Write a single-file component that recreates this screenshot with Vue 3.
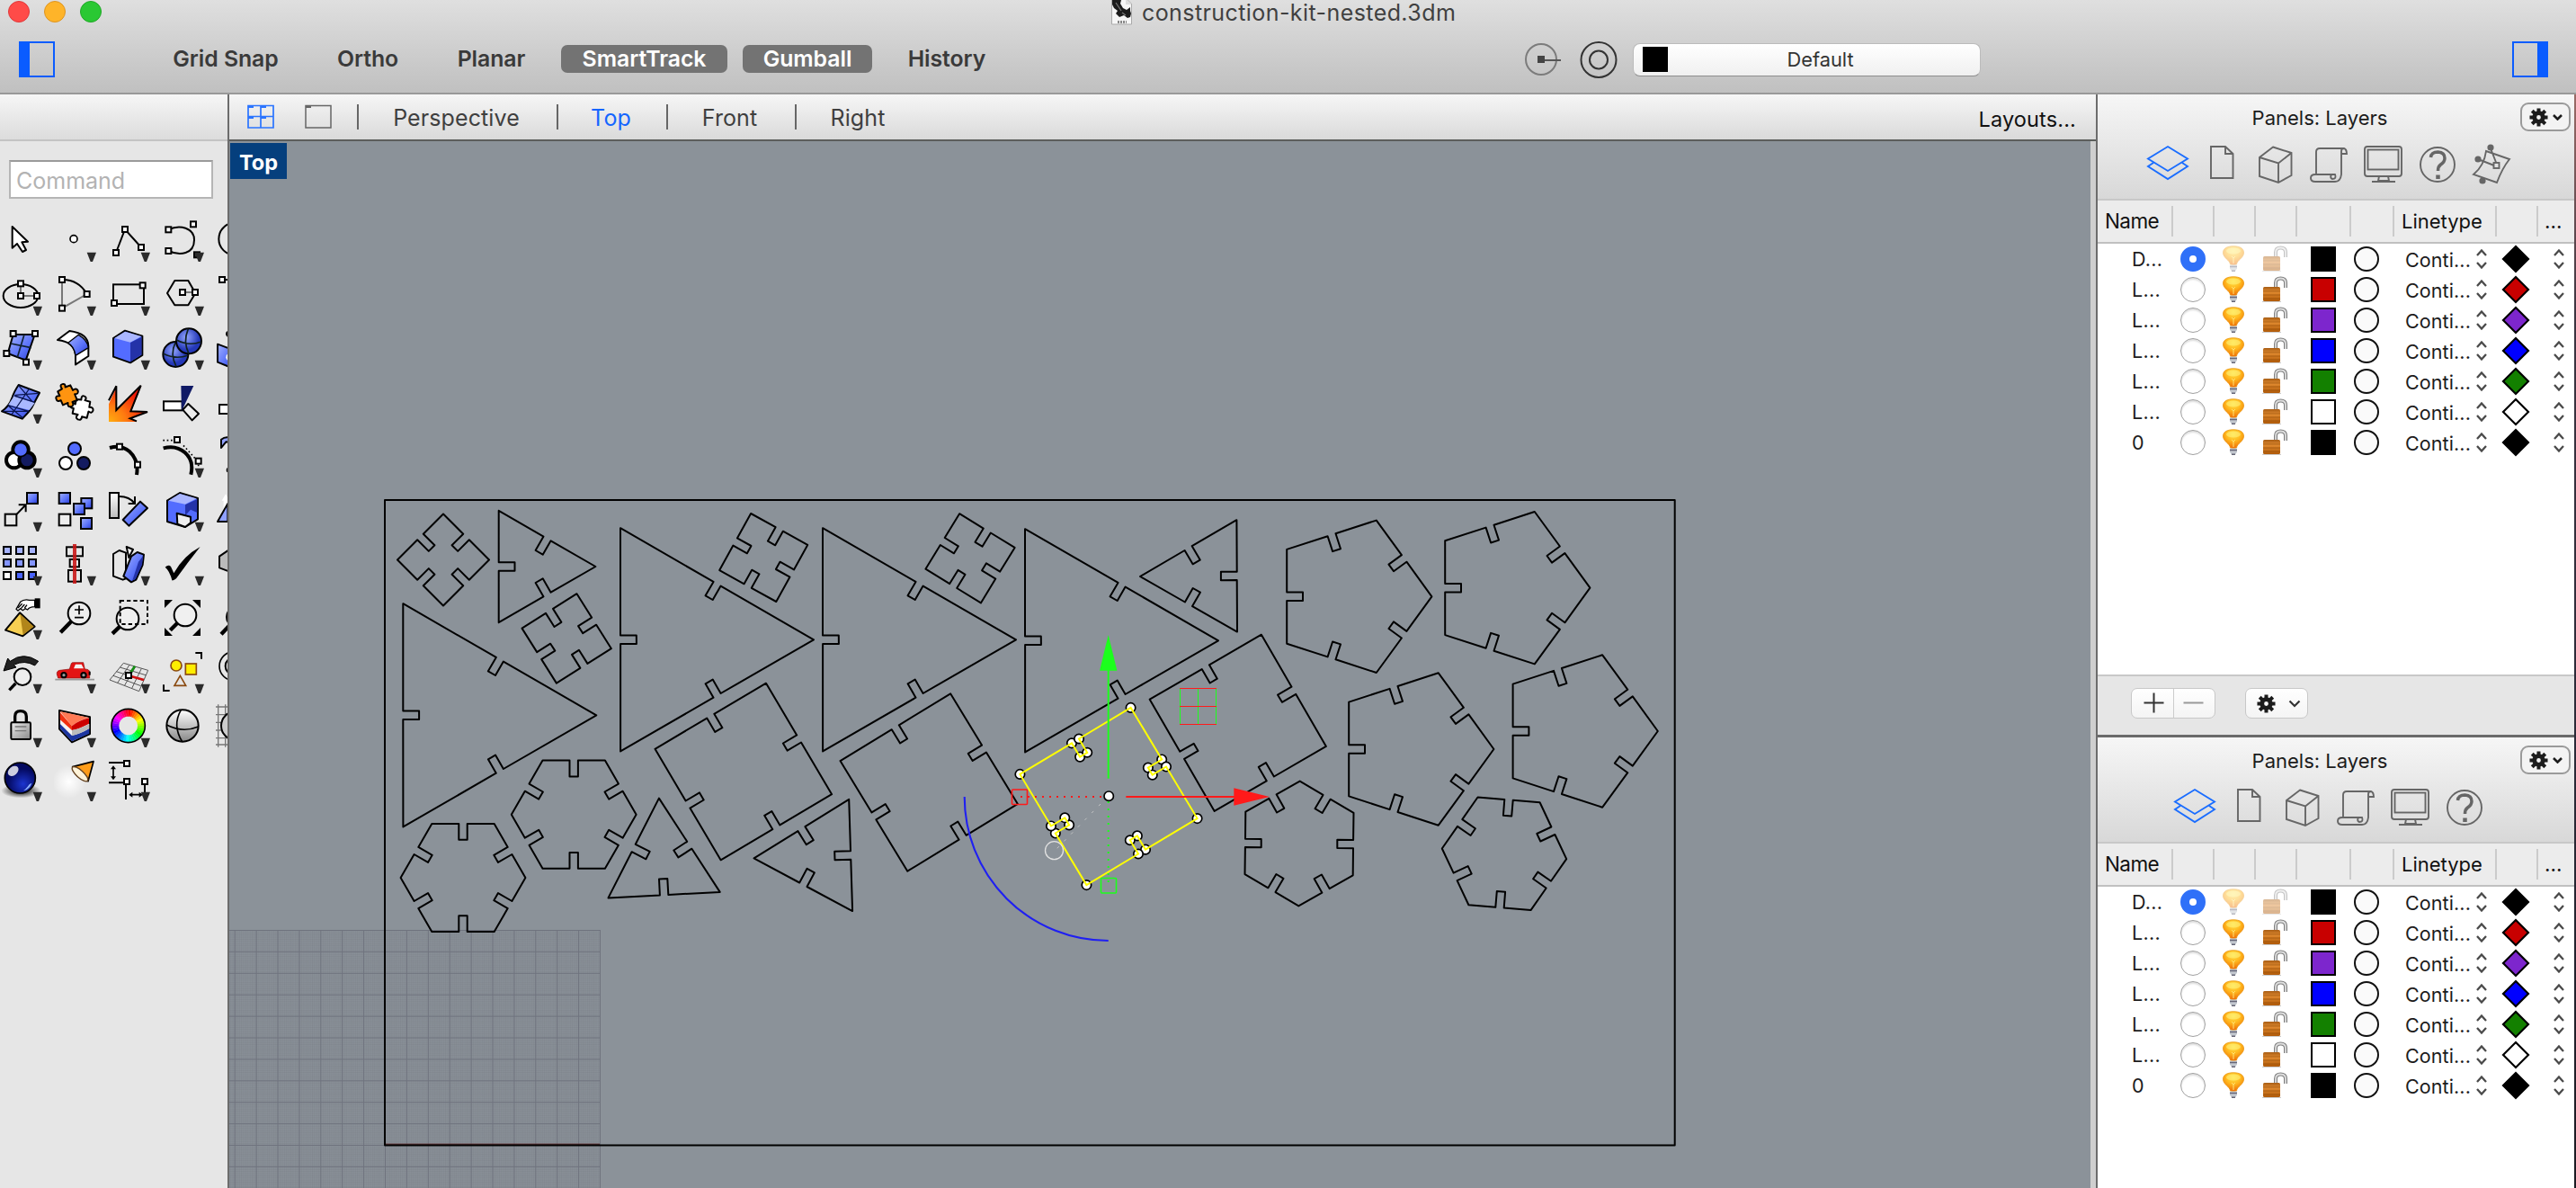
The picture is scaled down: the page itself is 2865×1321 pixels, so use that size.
<script setup>
const BLUE = 'url(#gBlue)'
const sq = (x, y, f = '#fff') =>
  `<rect x="${x - 9}" y="${y - 9}" width="18" height="18" fill="${f}" stroke="#000" stroke-width="6"/>`
const box = (x, y, w, h, f) =>
  `<rect x="${x}" y="${y}" width="${w}" height="${h}" fill="${f}" stroke="#000" stroke-width="6"/>`
const ln = (d, w = 6, c = '#000', extra = '') =>
  `<path d="${d}" fill="none" stroke="${c}" stroke-width="${w}" ${extra}/>`
const sh = (d, f, w = 6) =>
  `<path d="${d}" fill="${f}" stroke="#000" stroke-width="${w}" stroke-linejoin="round"/>`
const ci = (x, y, r, f, w = 6) =>
  `<circle cx="${x}" cy="${y}" r="${r}" fill="${f}" stroke="#000" stroke-width="${w}"/>`
const wheel = Array.from({ length: 36 }, (_, i) => {
  const a = (d) => ((d - 90) * Math.PI) / 180
  const p = (d) => `${68 + 43 * Math.cos(a(d))} ${81 + 43 * Math.sin(a(d))}`
  return ln(`M${p(i * 10 - 0.5)} A43 43 0 0 1 ${p(i * 10 + 10.5)}`, 24, `hsl(${i * 10} 100% 50%)`)
}).join('')
const puzzle = (f) =>
  sh('M-30 -22 L-14 -27 Q-20 -42 -9 -42 Q2 -42 -2 -30 L16 -32 L20 -14 Q34 -20 36 -8 Q36 4 23 0 L26 22 L9 24 Q13 38 0 38 Q-12 36 -6 23 L-24 26 L-27 9 Q-41 13 -41 0 Q-41 -11 -27 -6 Z', f)

// each tool is drawn in a 180 x 180 box; m marks tools with a flyout menu
const tools = [
  { s: sh('M41 36 V107 L57 93 L75 120 L87 114 L73 88 L93 86 Z', '#fff') },
  { m: 1, s: ci(66, 77, 12, '#fff', 5) },
  { m: 1, s: ln('M27 123 L57 45 L111 105') + sq(27, 123) + sq(57, 45) + sq(111, 105) },
  { m: 1, s: ln('M22 46 C60 28 108 40 108 80 C108 128 60 134 22 117') + sq(22, 46) + sq(105, 28) + sq(22, 117) + sq(117, 130, '#333') },
  { s: ci(64, 77, 54, 'none') },

  { m: 1, s: '<ellipse cx="69" cy="87" rx="58" ry="39" fill="none" stroke="#000" stroke-width="6"/>' + ln('M69 46 V87 H123', 6, '#777') + sq(69, 46) + sq(69, 87) + sq(123, 87) },
  { m: 1, s: ln('M110 81 L27 128 V33', 6, '#777') + ln('M27 33 Q82 32 110 81') + sq(27, 33) + sq(110, 81) + sq(27, 128) },
  { m: 1, s: box(18, 49, 102, 65, 'none') + sq(116, 52) + sq(21, 111) },
  { m: 1, s: sh('M18 78 L43 36 H88 L112 78 L88 118 H43 Z', 'none') + ln('M69 75 H111', 6, '#777') + sq(69, 75) + sq(111, 75) },
  { s: ln('M20 33 H60') + sq(21, 33) },

  { m: 1, s: sh('M44 36 H116 L86 122 L26 99 Z', BLUE) + ln('M81 36 L58 112 M36 66 L104 80', 5, '#123') + sq(44, 33) + sq(117, 33) + sq(87, 128) + sq(22, 99) },
  { m: 1, s: sh('M12 54 L52 24 Q115 32 115 75 V108 L72 136 V104 Q68 60 12 54 Z', '#fff') + sh('M47 64 L82 37 Q112 54 115 80 L72 106 Q68 76 47 64 Z', BLUE, 4) },
  { m: 1, s: sh('M57 23 L115 41 V105 L75 130 L18 110 V48 Z', '#536cff') + '<path d="M57 26 L112 42 L75 62 L22 48Z" fill="#aab6ff"/><path d="M75 63 L112 44 V103 L75 127Z" fill="#2432a8"/>' },
  { m: 1, s: ci(46, 102, 42, 'url(#gBall)') + ln('M5 100 Q46 120 86 106 M46 61 Q26 100 48 143', 5, '#122') + ci(90, 58, 42, 'url(#gBall)') + ln('M49 54 Q90 76 131 60 M88 17 Q70 60 90 100', 5, '#122') },
  { s: sh('M6 68 L60 88 V150 L6 128 Z', BLUE) + ci(44, 34, 8, '#000') + ci(46, 112, 12, '#fff', 0) },

  { m: 1, s: sh('M62 24 L132 50 Q118 76 106 100 Q96 116 74 137 L6 112 Q30 96 40 68 Q46 48 62 24 Z', BLUE) + '<path d="M46 62 L116 84 L98 108 L28 90Z" fill="#a9b8ff"/>' + ln('M98 36 Q72 75 38 124 M48 60 L116 82 M26 92 L96 112 M62 26 L108 80 M50 58 L128 52 M26 92 L76 134 M96 112 L10 112', 4, '#0a1550') },
  { s: `<g transform="translate(94 104) rotate(22)">${puzzle('#fff')}</g><g transform="translate(47 60) rotate(-14)">${puzzle('#ff9410')}</g>` },
  { s: '<path d="M3 147 V88 L30 28 V108 L112 26 L78 112 L132 115 L75 136 L98 147 Z" fill="url(#gFire)"/>' + ln('M3 76 L28 28 V108 L110 26 L76 112 L132 114 L74 136 L96 145') },
  { s: box(6, 79, 62, 30, '#fff') + '<path d="M64 27 H106 L66 112Z" fill="#101a66"/>' + sh('M70 107 L88 87 L123 120 L101 142 Z', '#eee') },
  { s: box(12, 90, 60, 30, '#fff') },

  { m: 1, s: ci(69, 60, 26, '#536cff', 12) + ci(47, 95, 26, '#fff', 12) + ci(90, 95, 26, '#131b60', 12) + ci(69, 60, 23, '#536cff', 5) },
  { s: ci(69, 57, 21, '#536cff') + ci(39, 105, 21, '#fff') + ci(99, 105, 21, '#131b60') },
  { s: ln('M6 54 Q44 42 72 66 Q104 96 96 144', 12) + sq(39, 50) + sq(99, 110) },
  { m: 1, s: ln('M4 29 H40 M72 46 L110 88 M122 110 V150', 5, '#000', 'stroke-dasharray="5 8"') + ln('M5 55 C60 40 112 80 97 143', 12) + sq(51, 27) + sq(122, 98) },
  { s: sh('M18 54 V26 Q36 12 60 26 V36 L34 34 Z', '#93a3ff') + ci(44, 128, 6, '#000') },

  { m: 1, s: box(90, 24, 36, 36, BLUE) + box(17, 95, 38, 38, '#e8e8e8') + ln('M54 97 L84 66 M62 64 H86 V88') },
  { s: box(17, 24, 37, 36, BLUE) + box(91, 42, 36, 34, BLUE) + box(66, 60, 36, 36, BLUE) + box(90, 108, 36, 36, BLUE) + box(17, 95, 38, 38, '#eee') },
  { s: box(6, 24, 30, 84, 'url(#gGrey)') + sh('M50 114 L108 53 L132 75 L70 134 Z', BLUE) + ln('M38 36 Q72 36 90 60 M90 36 V60 H68') },
  { m: 1, s: sh('M60 24 L120 42 V112 L78 138 L18 120 V50 Z', '#536cff') + '<path d="M60 27 L116 43 L78 62 L22 50Z" fill="#aab6ff"/><path d="M78 64 L118 45 V90 L96 80 L78 100Z" fill="#2432a8"/>' + sh('M50 92 L96 104 V124 L78 138 L52 128 Z', '#eee') },
  { s: '<path d="M33 28 L44 50 H38 V90 H26 V50 H20Z" fill="#fff"/>' + sh('M6 120 L40 60 V120 Z', '#8fa0ff') },

  { m: 1, s: [0, 1, 2].map(r => [0, 1, 2].map(c => box(12 + 42 * c, 24 + 42 * r, 24, 24, r === 2 ? (c ? '#4a63ff' : '#fff') : r ? '#8495ff' : '#a5b2ff')).join('')).join('') },
  { m: 1, s: box(42, 25, 54, 30, '#e6e6e6') + box(53, 66, 31, 25, '#e6e6e6') + box(48, 102, 42, 38, '#e6e6e6') + '<rect x="63" y="15" width="12" height="132" fill="#c81414" opacity=".88"/>' },
  { m: 1, s: sh('M18 48 L38 36 L60 44 V130 L50 134 L18 122 Z', '#e6e6e6') + sh('M62 24 L84 33 L70 60 Z', '#fff') + sh('M52 122 L78 56 L98 42 L120 50 L116 84 L94 134 L78 142 Z', BLUE) + '<path d="M102 74 L118 54 L114 84 L92 132 L82 136Z" fill="#2432a8"/>' },
  { m: 1, s: '<path d="M11 92 Q22 82 30 90 L40 112 Q72 54 128 24 Q88 74 48 130 Q40 137 34 136 Q26 104 11 92Z"/>' },
  { s: sh('M12 56 L44 34 V106 L12 94 Z', '#bbb') },

  { m: 1, s: sh('M54 52 L68 28 Q80 18 98 22 L116 22 V44 Q98 44 92 54 L84 50 L76 56 L68 50 L60 57 Z', '#fff', 4) + ln('M60 48 L74 34 M70 50 L82 36 M82 48 L90 38', 4) + '<rect x="116" y="16" width="18" height="33"/>' + sh('M66 64 L116 110 L76 142 L18 122 Z', '#f6cf52') + '<path d="M67 68 L113 110 L77 138Z" fill="#b1851a"/>' },
  { s: ln('M57 94 L22 130', 13) + ci(84, 66, 37, '#eee') + ln('M84 40 V70 M69 54 H99 M69 80 H99', 5) },
  { s: ln('M40 110 L15 134', 13) + ci(66, 84, 37, '#f0f0f0') + ln('M41 24 H132 V102 H41 Z', 6, '#000', 'stroke-dasharray="13 9"') },
  { s: '<path d="M9 21H36L9 48Z M129 21V48L102 21Z M9 141V114L36 141Z M129 141H102L129 114Z"/>' + ln('M52 98 L28 122', 13) + ci(78, 72, 37, '#f0f0f0') },
  { s: ln('M48 104 L18 136', 13) + ci(70, 78, 34, '#eee') },

  { m: 1, s: '<path d="M12 78 L26 36 L34 46 Q78 12 128 46 L116 60 Q82 40 46 58 L54 66Z" fill="#222" stroke="#000" stroke-width="3"/>' + ln('M52 120 L31 142', 10) + ci(75, 98, 28, '#eee') },
  { m: 1, s: ln('M4 107 H135', 5, '#999') + '<path d="M10 90 Q8 78 20 76 L52 72 L58 53 Q59 50 64 50 H98 L103 72 Q118 72 119 82 V102 H14Z" fill="#e31414" stroke="#8a0c0c" stroke-width="2"/><path d="M66 70 L72 56 H92 L99 70Z" fill="#f2f2f2"/><rect x="116" y="80" width="6" height="12"/>' + ci(33, 92, 8, '#999') + ci(99, 92, 8, '#999') },
  { m: 1, s: ln('M52 52 L134 76 L104 146 L6 108 Z M40 66 L126 92 M28 80 L118 110 M18 94 L110 128 M72 58 L32 118 M92 64 L56 126 M112 70 L80 136', 3, '#555') + ln('M69 94 L90 62', 8, '#159015') + ln('M69 94 L120 108', 8, '#d01010') + sq(69, 93) },
  { m: 1, s: `<g fill="#ffee00" stroke="#8a4a10" stroke-width="5"><circle cx="48" cy="60" r="18"/><rect x="79" y="54" width="36" height="36"/><path d="M61 94 L42 127 H80Z" fill="#e6e6e6"/></g>` + ln('M112 18 H132 V38 M6 124 V144 H26') },
  { s: ci(60, 62, 28, '#ddd') + ci(60, 62, 48, 'none', 5) },

  { m: 1, s: ln('M50 72 V50 Q50 32 68 32 Q88 32 88 50 V72', 10) + `<rect x="37" y="70" width="65" height="56" rx="4" fill="url(#gGrey2)" stroke="#000" stroke-width="6"/>` + ln('M50 84 H88 M50 98 H88', 4, '#777') },
  { m: 1, s: sh('M18 30 L120 52 V108 L60 136 L18 92 Z', '#f4f4f4') + '<path d="M20 33 L117 54 Q84 62 60 82Z" fill="#ff7a55"/><path d="M20 36 L60 82 V96 L20 60Z" fill="#f03010"/><path d="M60 82 Q84 62 117 55 V74 Q84 92 60 96Z" fill="#c00"/><path d="M60 114 Q88 108 118 90 V107 L60 133 L20 90 V74Z" fill="#1c35a0"/><path d="M60 96 V114 Q88 108 118 90 V75 Q84 92 60 96Z" fill="#bbb"/>' },
  { m: 1, s: wheel + ci(68, 81, 56, 'none', 5) },
  { s: ci(69, 81, 53, 'url(#gSph)') + ln('M16 78 Q69 106 122 84 M64 28 Q34 80 68 134', 5) },
  { s: ln('M0 18 H60 M0 44 H60 M0 70 H60 M0 96 H60 M0 122 H60 M0 144 H60 M8 10 V152 M32 10 V152', 4, '#777') + ci(66, 81, 48, '#ccc') },

  { m: 1, s: '<ellipse cx="70" cy="118" rx="66" ry="24" fill="url(#gShadow)"/>' + ci(67, 75, 51, 'url(#gNavy)', 5) + '<ellipse cx="44" cy="52" rx="20" ry="14" fill="#fff" opacity=".8" transform="rotate(-40 44 52)"/><path d="M78 118 Q100 112 106 92 Q98 94 92 104 Q86 112 78 118Z" fill="#8fb4ff"/>' },
  { m: 1, s: '<circle cx="50" cy="88" r="56" fill="url(#gGlow)"/>' + sh('M132 20 L62 38 Q66 70 114 86 Z', '#ff9d1a', 5) + '<ellipse cx="87" cy="62" rx="34" ry="12" transform="rotate(42 87 62)" fill="#fff3d8" stroke="#642" stroke-width="4"/>' },
  { m: 1, s: ln('M3 24 H60 M3 91 H60 M60 90 V147 M123 90 V130') + ln('M18 40 V78 M74 131 H112', 5) + '<path d="M18 34l9 12h-18z M18 82l9 -12h-18z M70 131l12 -9v18z M116 131l-12 -9v18z"/>' + sq(63, 27) + sq(63, 87) + sq(123, 87) },
]

// regular polygons with one slot in the middle of every side
const SLOT_W = 9.4
const SLOT_D = 17.8
function outline(n, cx, cy, r, rot) {
  const v = Array.from({ length: n }, (_, i) => {
    const a = ((rot + (360 / n) * i) * Math.PI) / 180
    return [cx + r * Math.cos(a), cy + r * Math.sin(a)]
  })
  const out = []
  v.forEach(([x1, y1], i) => {
    const [x2, y2] = v[(i + 1) % n]
    const len = Math.hypot(x2 - x1, y2 - y1)
    const ux = (x2 - x1) / len
    const uy = (y2 - y1) / len
    const at = (t, d) => [x1 + ux * t - uy * d, y1 + uy * t + ux * d]
    const a = (len - SLOT_W) / 2
    out.push([x1, y1], at(a, 0), at(a, SLOT_D), at(a + SLOT_W, SLOT_D), at(a + SLOT_W, 0))
  })
  return out
}
const toStr = (pts) => pts.map((p) => p.map((k) => k.toFixed(1)).join(',')).join(' ')
const parts = [
  [4, 493, 622.5, 51, 0], [4, 630.2, 709.9, 51, 12.8], [4, 849.2, 620, 51, -16], [4, 1079, 620.8, 51, -13.5],
  [4, 826.8, 858, 101.5, 14.4], [4, 1033.2, 870, 101.5, 13.6], [4, 1376.8, 803.8, 101.5, 14.9],
  [3, 520, 795.3, 143.3, 0], [3, 761.7, 711.3, 143.3, 0], [3, 986.7, 711.3, 143.3, 0], [3, 1211.7, 712.3, 143.3, 0],
  [3, 590.6, 630, 71.8, 0], [3, 736.7, 959.3, 71.8, 27], [3, 910.3, 952.1, 71.8, 178.2], [3, 1339.8, 640.6, 71.8, 179.7],
  [6, 515, 976, 69.4, 0], [6, 638.2, 905.7, 69.4, 0], [6, 1445, 938, 69.4, -89.4], [6, 1673, 949.3, 69.4, 4.8],
  [5, 1503.3, 663.3, 89.1, 0], [5, 1679.3, 653.7, 89.1, 0], [5, 1572.3, 833, 89.1, 0], [5, 1754.7, 813, 89.1, 0],
].map((p) => toStr(outline(...p)))
const selected = outline(4, 1233, 885.5, 101.6, 14)

const snaps = [
  { t: 'Grid Snap', w: 118, g: 131 }, { t: 'Ortho', w: 70, g: 64 }, { t: 'Planar', w: 77, g: 64 },
  { t: 'SmartTrack', w: 185, g: 39, on: true }, { t: 'Gumball', w: 144, g: 17, on: true }, { t: 'History', w: 88, g: 39 },
]
const views = [
  { t: 'Perspective', w: 141, a: 38, b: 41 }, { t: 'Top', w: 43, a: 37, b: 40, on: true },
  { t: 'Front', w: 63, a: 37, b: 41 }, { t: 'Right', w: 64, a: 36, b: 0 },
]
const layers = [
  { n: 'D...', c: '#000', on: true }, { n: 'L...', c: '#c80000' }, { n: 'L...', c: '#7d26cd' },
  { n: 'L...', c: '#0000ff' }, { n: 'L...', c: '#138000' }, { n: 'L...', c: '#fff' }, { n: '0', c: '#000' },
]
const panelIcons = [
  '<g stroke="#1a6dff"><path d="M30 12 L52 25.5 L30 39 L8 25.5Z M14 30 L8 34 L30 48 L52 34 L46 30"/></g>',
  '<path d="M18 12 H34 L42.5 20 V47 H18Z M34 12 V20 H42.5"/>',
  '<path d="M27 12.500 L47.500 19 V44 L33 52 L12 45 V24Z M12 24 L33 30.500 L47.500 19 M33 30.500 V52"/>',
  '<path d="M15 43 V18 Q15 14 19 14 H46 Q49 15 49 20 H43 V17 Q43 14 46 14 M43 20 V43 Q42 51 36 51 H14 Q9 51 9 47 Q9 43 14 43 H36 Q38 48 33 48 Q30 47 32 43"/>',
  '<rect x="9" y="12" width="41" height="33" rx="3"/><rect x="12.500" y="15.500" width="34" height="22"/><path d="M25 45 L24 50 H36 L35 45 M17 51 H43"/>',
  '<circle cx="30" cy="32" r="19"/><path stroke-width="3.500" d="M22.500 24 Q23 18 30.500 18 Q38 18.500 38 25 Q38 29 33.500 32 Q30.500 34 30.500 39"/><path stroke-width="4.500" d="M30.500 43.500 V48"/>',
  '<path d="M24 17 L50 26 Q42 36 36 52 L10 43 Q22 33 24 17Z M29 14 L36 32 M15 26 L33 33"/><rect x="32.500" y="30" width="6" height="6" fill="#e4e4e4"/><g fill="#666" stroke="none"><circle cx="29" cy="13" r="3.600"/><circle cx="15" cy="26" r="3.600"/><circle cx="20" cy="50" r="3.600"/></g>',
]
const panels = [{ icons: panelIcons, footer: true }, { icons: panelIcons.slice(0, 6), footer: false }]
</script>

<template>
  <div class="app">
    <svg class="defs" width="0" height="0">
      <defs>
        <linearGradient id="gBlue" x1="0" y1="0" x2="1" y2="1"><stop offset="0" stop-color="#a3b2ff" /><stop offset=".6" stop-color="#5870f8" /><stop offset="1" stop-color="#2a3bd0" /></linearGradient>
        <radialGradient id="gBall" cx=".4" cy=".35"><stop offset="0" stop-color="#93a6ff" /><stop offset="1" stop-color="#2438b8" /></radialGradient>
        <radialGradient id="gFire" cx="0" cy="1" r="1"><stop offset="0" stop-color="#ffae10" /><stop offset=".45" stop-color="#ff7a10" /><stop offset="1" stop-color="#f01808" /></radialGradient>
        <linearGradient id="gGrey" x1="0" y1="0" x2="0" y2="1"><stop offset="0" stop-color="#fff" /><stop offset="1" stop-color="#bbb" /></linearGradient>
        <linearGradient id="gGrey2" x1="0" y1="0" x2="1" y2="1"><stop offset="0" stop-color="#eee" /><stop offset="1" stop-color="#888" /></linearGradient>
        <linearGradient id="gSph" x1="0" y1="0" x2="0" y2="1"><stop offset="0" stop-color="#fff" /><stop offset="1" stop-color="#888" /></linearGradient>
        <radialGradient id="gShadow"><stop offset=".4" stop-color="#333" stop-opacity=".8" /><stop offset="1" stop-color="#333" stop-opacity="0" /></radialGradient>
        <radialGradient id="gNavy" cx=".6" cy=".7"><stop offset="0" stop-color="#1c35d0" /><stop offset="1" stop-color="#040a60" /></radialGradient>
        <radialGradient id="gGlow"><stop offset="0" stop-color="#fff" /><stop offset="1" stop-color="#fff" stop-opacity="0" /></radialGradient>
        <radialGradient id="gBulb" cx=".5" cy=".25" r=".7"><stop offset="0" stop-color="#ffe34a" /><stop offset=".5" stop-color="#ffb81e" /><stop offset="1" stop-color="#f07408" /></radialGradient>
        <linearGradient id="gLock" x1="0" y1="0" x2="0" y2="1"><stop offset="0" stop-color="#a85d14" /><stop offset=".35" stop-color="#e08a30" /><stop offset="1" stop-color="#b05a08" /></linearGradient>
        <symbol id="gear" viewBox="-11 -11 22 22">
          <circle r="5" fill="none" stroke="#1c1c1c" stroke-width="5" />
          <path d="M0 -10.500V-6M0 10.500V6M-10.500 0H-6M10.500 0H6M-7.600 -7.600L-4.500 -4.500M7.600 7.600L4.500 4.500M-7.600 7.600L-4.500 4.500M7.600 -7.600L4.500 -4.500" stroke="#1c1c1c" stroke-width="4.200" />
        </symbol>
      </defs>
    </svg>

    <header class="top">
      <div class="titlebar">
        <div class="lights"><i class="red" /><i class="amber" /><i class="green" /></div>
        <svg class="docicon" width="26" height="29" viewBox="0 0 26 29">
          <path d="M1.500 -2 H17 L23.500 4 V27 H1.500Z" fill="#f6f6f6" stroke="#aaa" />
          <path d="M17 -2 V5 H23.500" fill="#ddd" />
          <path d="M2 0 H12 L11 4 L14 9 L18 11 L22 8 V12 L23 15 L22 19 L19 20 L15 17 L10 19 L6 15 L8 12 L4 9 L2 5Z" fill="#1c1c1c" />
          <path d="M6 3l6 9M13 14l4 3" stroke="#777" stroke-width="1.200" />
          <path d="M8 24.500 H18" stroke="#888" stroke-width="3" stroke-dasharray="2 1" />
        </svg>
        <span class="doc">construction-kit-nested.3dm</span>
      </div>
      <div class="toolbar">
        <svg class="side" width="40" height="40"><rect x="1" y="1" width="38" height="38" fill="none" stroke="#0a5cff" stroke-width="2" /><rect width="12" height="40" fill="#0a5cff" /></svg>
        <span v-for="s in snaps" :key="s.t" class="snap" :class="{ on: s.on }" :style="{ width: s.w + 'px', marginLeft: s.g + 'px' }">{{ s.t }}</span>
        <svg class="osnap" width="108" height="44" viewBox="0 0 108 44" fill="none" stroke="#333">
          <circle cx="22" cy="22" r="17" stroke="#7c7c7c" stroke-width="2" />
          <rect x="18" y="18" width="8" height="8" fill="#444" stroke="none" /><path d="M26 23 H44" stroke="#555" stroke-width="2" />
          <circle cx="86" cy="22.500" r="19.500" stroke-width="2" /><circle cx="86" cy="22.500" r="10" stroke-width="2" />
        </svg>
        <div class="select"><i /><span>Default</span></div>
        <svg class="side last" width="40" height="40"><rect x="1" y="1" width="38" height="38" fill="none" stroke="#0a5cff" stroke-width="2" /><rect x="28" width="12" height="40" fill="#0a5cff" /></svg>
      </div>
    </header>

    <div class="body">
      <aside class="tools">
        <div class="blank" />
        <div class="cmd">Command</div>
        <div class="grid">
          <svg v-for="(t, i) in tools" :key="i" width="60" height="60" viewBox="0 0 180 180">
            <g v-html="t.s" />
            <path v-if="t.m" d="M110 122 H141 L129 153 H122 Z" fill="#2b2b2b" />
          </svg>
        </div>
      </aside>

      <main class="center">
        <nav class="tabs">
          <svg class="quad" width="30" height="28" fill="none" stroke="#2a74ff" stroke-width="1.700"><path d="M1 1.500 H29 V26 H1Z M15 1.500 V26 M1 13.500 H29" /><path d="M1 3h6M15 3h6M1 15h6M15 15h6" stroke-width="2" /></svg>
          <svg class="mono" width="30" height="28" fill="none" stroke="#666" stroke-width="1.500"><path d="M1 1.500 H29 V26 H1Z" /><path d="M1 3h6" stroke-width="2" /></svg>
          <template v-for="v in views" :key="v.t">
            <i class="bar" />
            <span class="view" :class="{ on: v.on }" :style="{ width: v.w + 'px', marginLeft: v.a + 'px', marginRight: v.b + 'px' }">{{ v.t }}</span>
          </template>
          <span class="layouts">Layouts...</span>
        </nav>
        <div class="stage">
          <div class="canvas">
            <span class="vname">Top</span>
            <svg width="2070" height="1164" viewBox="255 157 2070 1164" fill="none">
              <defs>
                <pattern id="minor" x="667.300" y="1034.500" width="2.390" height="2.390" patternUnits="userSpaceOnUse"><path d="M0 .5H2.390M.5 0V2.390" stroke="#747983" stroke-width=".6" opacity=".4" /></pattern>
                <pattern id="major" x="667" y="1034" width="23.900" height="23.900" patternUnits="userSpaceOnUse"><path d="M0 .5H23.900M.5 0V23.900" stroke="#6f737e" stroke-width="1" /></pattern>
              </defs>
              <rect x="255" y="1034" width="413" height="287" fill="#888f97" />
              <rect x="255" y="1034" width="413" height="287" fill="url(#minor)" />
              <rect x="255" y="1034" width="413" height="287" fill="url(#major)" />
              <path d="M429 1272.200 H667" stroke="#5a1a1a" stroke-width="1" />
              <g stroke="#000" stroke-width="2" stroke-linejoin="round">
                <rect x="428" y="556" width="1434.700" height="717.500" />
                <polygon v-for="(p, i) in parts" :key="i" :points="p" />
              </g>
              <g stroke="#000" stroke-width="1.700" fill="#fff"><circle v-for="(p, i) in selected" :key="i" :cx="p[0]" :cy="p[1]" r="5.200" /></g>
              <polygon :points="toStr(selected)" stroke="#ffff00" stroke-width="2" />
              <path d="M1224 894 L1174 945" stroke="#c4c4c4" stroke-dasharray="3 8" />
              <circle cx="1172.500" cy="945.700" r="10" stroke="#e2e2e2" stroke-width="1.300" />
              <path d="M1072.700 886 A160 160 0 0 0 1232.700 1046" stroke="#1f1ff2" stroke-width="2.100" />
              <g stroke="#ff1a1a">
                <path d="M1135 886 H1226" stroke-width="2" stroke-dasharray="2 6" />
                <rect x="1125.500" y="878" width="17" height="16.500" rx="1" stroke-width="1.600" />
                <path d="M1252.300 886 H1373" stroke-width="2" />
                <path d="M1372.300 876.200 L1412 886 L1372.300 895.800Z" fill="#ff1a1a" stroke="none" />
              </g>
              <path d="M1312.500 765 V806 M1332.500 765 V806 M1352.500 765 V806" stroke="#1cff1c" />
              <path d="M1312 765.500 H1353 M1312 785.500 H1353 M1312 805.500 H1353" stroke="#ff1a1a" />
              <g stroke="#1cff1c">
                <path d="M1232.700 891 V982" stroke-width="2" stroke-dasharray="2 6" />
                <rect x="1224.500" y="976.500" width="17" height="16.500" rx="1" stroke-width="1.600" />
                <path d="M1232.700 865.700 V745" stroke-width="2" />
                <path d="M1223 745.700 L1232.700 706 L1242.400 745.700Z" fill="#1cff1c" stroke="none" />
              </g>
              <circle cx="1233.200" cy="885.200" r="5.200" fill="#fff" stroke="#000" stroke-width="1.700" />
            </svg>
          </div>
        </div>
      </main>

      <aside class="panels">
        <section v-for="(p, k) in panels" :key="k" class="panel" :class="{ first: p.footer }">
          <div class="phead">
            <span class="ptitle">Panels: Layers</span>
            <div class="gearbtn"><svg width="21" height="21"><use href="#gear" /></svg><svg width="11" height="7" fill="none" stroke="#1c1c1c" stroke-width="2.600"><path d="M1 1l4.500 4.500L10 1" /></svg></div>
            <div class="picons"><svg v-for="(ic, i) in p.icons" :key="i" width="60" height="60" fill="none" stroke="#666" stroke-width="1.900" v-html="ic" /></div>
          </div>
          <div class="cols thead">
            <span class="nm">Name</span><i /><i /><i /><i /><i /><span class="lt">Linetype</span><i /><span class="dots">...</span>
          </div>
          <div class="rows">
            <div v-for="(l, i) in layers" :key="i" class="cols row">
              <span class="lname">{{ l.n }}</span>
              <span class="cell"><b class="radio" :class="{ on: l.on }" /></span>
              <span class="cell" :class="{ dim: l.on }">
                <svg width="26" height="30" viewBox="0 0 26 30"><path d="M9.500 21 C9 16 1.500 14 1.500 8 C1.500 3 6 .8 13 .8 C20 .8 24.500 3 24.500 8 C24.500 14 17 16 16.500 21 Q13 22.500 9.500 21Z" fill="url(#gBulb)" stroke="#e8960c" stroke-width=".8" /><ellipse cx="13" cy="6" rx="8" ry="3.500" fill="#fff27a" opacity=".6" /><path d="M11 12l2 2 2-2M13 14v6" stroke="#ffe070" fill="none" /><path d="M9 21.500h8v4l-2 3h-4l-2-3z" fill="#c3c8cf" /><path d="M9 23.500h8M11 28.300h4" stroke="#667" stroke-width="1.400" /></svg>
              </span>
              <span class="cell" :class="{ dim: l.on }">
                <svg width="28" height="30" viewBox="0 0 28 30"><path d="M15 13 V7.500 Q15 2.500 20.500 2.500 Q26 2.500 26 7.500 V13" fill="none" stroke="#808080" stroke-width="4" /><path d="M15 13 V7.500 Q15 2.500 20.500 2.500 Q26 2.500 26 7.500 V13" fill="none" stroke="#dedede" stroke-width="1.800" /><rect x="1" y="12" width="19" height="16" rx="1.500" fill="url(#gLock)" /><path d="M1 17h19M1 21h19M1 25h19" stroke="#8a4606" stroke-width=".8" opacity=".7" /><path d="M0 28.500h21" stroke="#ccc" /></svg>
              </span>
              <span class="cell c60"><b class="swatch" :style="{ background: l.c }" /></span>
              <span class="cell"><b class="ring" /></span>
              <span class="conti"><em>Conti...</em><svg width="14" height="22" fill="none" stroke="#4a4a4a" stroke-width="2.300"><path d="M2 7l5-5.500L12 7M2 15l5 5.500L12 15" /></svg></span>
              <span class="cell"><svg width="32" height="32"><path d="M16 2L30 16L16 30L2 16Z" :fill="l.c" stroke="#000" stroke-width="2.200" /></svg></span>
              <span class="cell end"><svg width="14" height="22" fill="none" stroke="#4a4a4a" stroke-width="2.300"><path d="M2 7l5-5.500L12 7M2 15l5 5.500L12 15" /></svg></span>
            </div>
          </div>
          <div v-if="p.footer" class="foot">
            <div class="pm"><svg width="46" height="32" fill="none" stroke="#333" stroke-width="2"><path d="M13.500 15.500h22M24.500 4.500v22" /></svg><svg width="46" height="32" fill="none" stroke="#999" stroke-width="2"><path d="M10.500 15.500h22" /></svg></div>
            <div class="gm"><svg width="21" height="21"><use href="#gear" /></svg><svg width="14" height="9" fill="none" stroke="#333" stroke-width="2.200"><path d="M1.500 1.500L7 7l5.500-5.500" /></svg></div>
          </div>
        </section>
      </aside>
      <div class="desk" />
    </div>
  </div>
</template>

<style>
body { overflow: hidden; }
</style>

<style scoped>
.app { width: 2865px; height: 1321px; display: flex; flex-direction: column; overflow: hidden; background: #e6e6e6; font-family: Inter, "Liberation Sans", sans-serif; color: #1c1c1c; }
.app * { box-sizing: border-box; }
.app svg { display: block; flex: none; }
.app .defs { position: absolute; }
span, em { white-space: nowrap; font-style: normal; }
.top { height: 105px; flex: none; background: linear-gradient(#dfdfdf, #c0c0c0); border-bottom: 2px solid #999; }
.titlebar { height: 28px; display: flex; align-items: flex-start; }
.lights { display: flex; gap: 16px; padding: 1px 0 0 9px; width: 1235px; }
.lights i { width: 24px; height: 24px; border-radius: 50%; border: 1px solid; }
.red { background: #ff4b48; border-color: #e0383a !important; }
.amber { background: #feb429; border-color: #de9420 !important; }
.green { background: #2ac833; border-color: #1fa826 !important; }
.doc { margin-left: 9px; font-size: 25px; line-height: 29px; color: #404040; letter-spacing: 0.42px; }
.toolbar { height: 76px; display: flex; align-items: center; padding: 0 0 1px 21px; }
.snap { display: flex; justify-content: center; font-size: 24.800px; font-weight: 600; line-height: 31px; color: #3a3a3a; letter-spacing: -0.05px; }
.snap.on { background: #737373; color: #fff; border-radius: 7px; }
.osnap { margin-left: 595px; }
.select { width: 387px; height: 37px; margin: 1px 0 0 16px; padding-left: 10px; display: flex; align-items: center; background: linear-gradient(#fff, #f0f0f0); border-radius: 8px; border: 1px solid #bbb; border-bottom-color: #8e8e8e; }
.select i { width: 28px; height: 28px; background: #000; }
.select span { flex: 1; text-align: center; font-size: 21.800px; color: #333; padding-right: 8px; }
.last { margin-left: 591px; }
.body { flex: 1; display: flex; min-height: 0; }
.tools { width: 255px; flex: none; border-right: 2px solid #6c6c6c; overflow: hidden; }
.blank { height: 52px; background: linear-gradient(#f6f6f6, #dcdcdc); border-bottom: 2px solid #c4c4c4; }
.cmd { margin: 21px 0 0 10px; width: 227px; height: 43px; border: 2px solid #b5b5b5; border-top-color: #9a9a9a; background: #fff; color: #b3b3b3; font-size: 25px; line-height: 43px; padding-left: 6px; letter-spacing: 0px; }
.grid { margin-top: 19px; width: 300px; display: grid; grid-template-columns: repeat(5, 60px); }
.center { width: 2078px; flex: none; display: flex; flex-direction: column; border-right: 2px solid #6c6c6c; }
.tabs { height: 52px; flex: none; display: flex; align-items: center; background: linear-gradient(#f6f6f6, #dadada); border-bottom: 2px solid #5c5e5c; }
.quad { margin-left: 20px; }
.mono { margin: 0 28px 0 34px; }
.bar { width: 2px; height: 28px; background: #666; }
.view { display: flex; justify-content: center; font-size: 25px; line-height: 30px; padding-top: 2px; color: #3f3f3f; letter-spacing: 0.1px; }
.view.on { color: #1465ff; }
.layouts { margin-left: auto; padding-right: 22px; padding-top: 4px; font-size: 23.500px; letter-spacing: 0.15px; color: #111; }
.stage { flex: 1; background: #cfcfcf; }
.canvas { position: relative; width: 2070px; height: 1164px; background: #8b9299; }
.vname { position: absolute; left: 1px; top: 2px; width: 63px; height: 40px; background: #053f7d; color: #fff; font-size: 23.500px; font-weight: 700; line-height: 43px; text-align: center; }
.panels { width: 530px; flex: none; display: flex; flex-direction: column; }
.panel { flex: 1; display: flex; flex-direction: column; background: #fff; }
.panel.first { flex: none; height: 715px; border-bottom: 3px solid #6a6a6a; }
.phead { height: 118px; flex: none; display: grid; grid-template-columns: 1fr auto; grid-template-rows: 48px 60px; background: linear-gradient(#f6f6f6, #d8d8d8); border-bottom: 2px solid #c8c8c8; }
.ptitle { font-size: 22px; line-height: 53px; text-align: center; padding-left: 24px; }
.gearbtn { width: 56px; height: 32px; margin: 9px 4px 0 0; border: 2px solid #9a9a9a; border-radius: 9px; display: flex; align-items: center; justify-content: center; gap: 5px; background: #f3f3f3; }
.picons { grid-column: 1 / 3; height: 60px; padding-left: 48px; display: flex; margin-top: -2px; }
.panel:not(.first) .picons { padding-left: 78px; }
.cols { display: grid; grid-template-columns: 82px 46px 46px 46px 60px 48px 114px 46px 42px; }
.thead { height: 48px; flex: none; background: #ececec; border-bottom: 2px solid #c0c0c0; align-items: center; font-size: 22.500px; color: #111; }
.thead > * { height: 34px; line-height: 34px; border-left: 2px solid #cbcbcb; }
.thead .nm { border: 0; padding-left: 8px; letter-spacing: -0.6px; }
.thead .lt { padding-left: 8px; letter-spacing: 0; font-size: 22px; }
.thead .dots { padding-left: 7px; }
.rows { flex: 1; }
.row { height: 34px; align-items: center; }
.lname { padding-left: 38px; font-size: 21.500px; line-height: 30px; letter-spacing: 0.3px; }
.cell { display: flex; justify-content: center; }
.dim { opacity: .45; }
.c60 { padding-left: 2px; }
.radio { width: 28px; height: 28px; border-radius: 50%; border: 1px solid #a0a0a0; background: #fff; box-shadow: inset 0 2px 2px #ddd; margin-left: 2px; }
.radio.on { border: 10px solid #2f70f8; box-shadow: none; }
.swatch { width: 28px; height: 28px; border: 2px solid #000; }
.ring { width: 28px; height: 28px; border: 2px solid #111; border-radius: 50%; background: #fafafa; margin-right: 11px; }
.conti { display: flex; align-items: center; }
.conti em { width: 82px; padding: 2px 0 0 14px; font-size: 21.500px; margin-right: 10px; letter-spacing: 0.1px; }
.end { justify-content: flex-start; padding-left: 18px; }
.foot { height: 67px; flex: none; border-top: 2px solid #c8c8c8; background: #e6e6e6; display: flex; padding: 13px 0 0 37px; gap: 33px; }
.pm, .gm { height: 34px; display: flex; background: linear-gradient(#fff, #f4f4f4); border: 1px solid #c8c8c8; border-radius: 7px; }
.pm { width: 94px; }
.pm svg + svg { border-left: 1px solid #ccc; }
.gm { width: 70px; align-items: center; justify-content: space-between; padding: 0 7px 0 12px; }
.desk { width: 2px; background: linear-gradient(#9a6a66, #3c3440 20%, #2b2a38 60%, #1c1a22); }
</style>
